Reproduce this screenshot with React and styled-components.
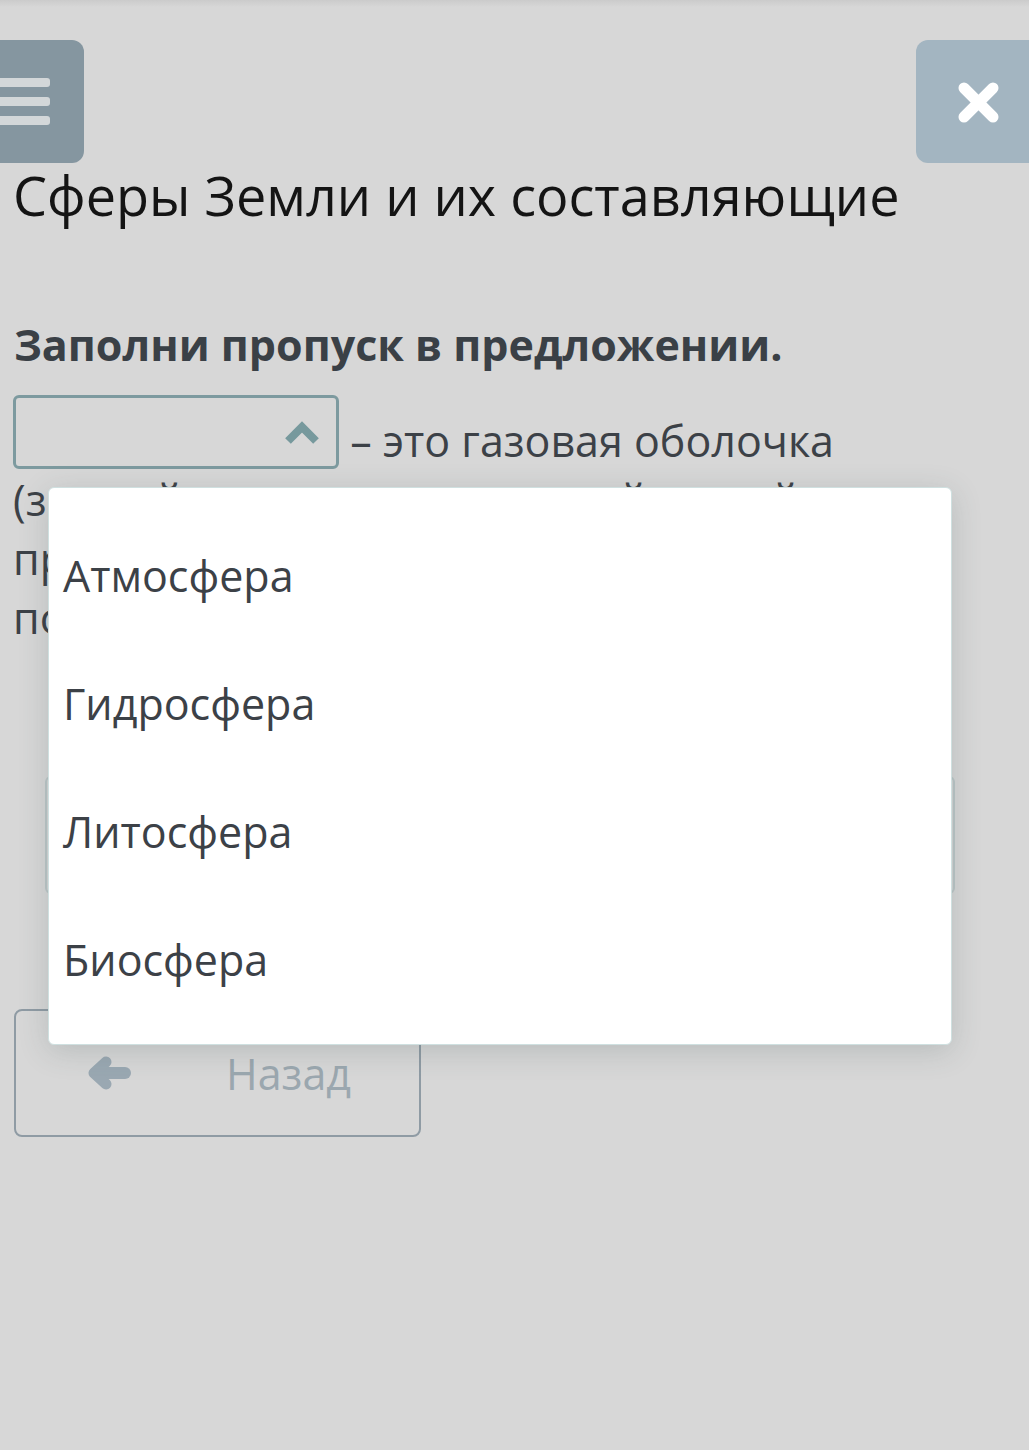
import React from "react";
import styled, { createGlobalStyle } from "styled-components";

const GlobalStyle = createGlobalStyle`
  html, body {
    margin: 0;
    padding: 0;
    background: #d7d7d7;
  }
  body {
    font-family: "Open Sans", "Noto Sans", sans-serif;
  }
`;

const Page = styled.div`
  position: relative;
  box-sizing: border-box;
  width: 1029px;
  min-height: 1450px;
  overflow: hidden;
  padding: 40px 13px 0 14px;
  background: linear-gradient(#cbcbcb, #d7d7d7 7px, #d7d7d7);
`;

const Header = styled.header`
  display: flex;
  justify-content: space-between;
  align-items: stretch;
  height: 123px;
  margin: 0 -13px 0 -14px;
`;

const MenuButton = styled.div`
  box-sizing: border-box;
  width: 124px;
  margin-left: -40px;
  padding-top: 38px;
  background: #8596a0;
  border-radius: 12px;
  display: flex;
  flex-direction: column;
  gap: 10px;
`;

const MenuLine = styled.span`
  display: block;
  width: 90px;
  height: 9px;
  background: #d3d7d9;
  border-radius: 0 3px 3px 0;
`;

const CloseButton = styled.div`
  box-sizing: border-box;
  width: 150px;
  margin-right: -37px;
  padding-left: 41px;
  padding-top: 2px;
  background: #a3b5c1;
  border-radius: 12px;
  display: flex;
  align-items: center;
`;

const Title = styled.h1`
  margin: 0 0 0 -1px;
  font-size: 54px;
  line-height: 64px;
  font-weight: 400;
  color: #141414;
`;

const Heading = styled.h2`
  margin: 90px 0 0 0;
  font-size: 43px;
  line-height: 56px;
  font-weight: 700;
  color: #3a4046;
`;

const Sentence = styled.p`
  margin: 22px 0 0 -1px;
  font-size: 43px;
  line-height: 59px;
  color: #3c4147;
  white-space: nowrap;
`;

const Select = styled.span`
  display: inline-block;
  box-sizing: border-box;
  width: 326px;
  height: 74px;
  overflow: hidden;
  vertical-align: -12px;
  border: 3px solid #7d9a9f;
  border-radius: 6px;

  svg {
    display: block;
    margin: 21px 15px 0 auto;
  }
`;

const HiddenBox = styled.div`
  box-sizing: border-box;
  margin: 129px 0 0 31px;
  width: 910px;
  height: 118px;
  border: 2px solid #bcc6c7;
  border-radius: 6px;
`;

const BackButton = styled.button`
  box-sizing: border-box;
  display: flex;
  align-items: center;
  gap: 95px;
  margin-top: 115px;
  width: 407px;
  height: 128px;
  padding: 0 0 0 72px;
  background: transparent;
  border: 2px solid #8f9ba4;
  border-radius: 8px;
  font-family: "Open Sans", "Noto Sans", sans-serif;
  font-size: 43px;
  color: #9ba7af;
`;

const Dropdown = styled.ul`
  position: absolute;
  left: 48px;
  top: 487px;
  box-sizing: border-box;
  width: 904px;
  height: 558px;
  margin: 0;
  padding: 24px 0 22px;
  list-style: none;
  background: #ffffff;
  border: 1px solid #cfe0e0;
  border-radius: 6px;
  box-shadow: 0 6px 30px rgba(60, 80, 80, 0.2);
`;

const Option = styled.li`
  height: 128px;
  line-height: 128px;
  padding-left: 14px;
  font-size: 43px;
  color: #3c4147;
`;

const ChevronUp = () => (
  <svg width="38" height="27" viewBox="0 0 38 27">
    <polyline
      points="5,22 19,8 33,22"
      fill="none"
      stroke="#77999d"
      strokeWidth="8"
      strokeLinejoin="miter"
    />
  </svg>
);

const CloseIcon = () => (
  <svg width="43" height="43" viewBox="0 0 43 43">
    <g stroke="#ffffff" strokeWidth="11" strokeLinecap="round">
      <line x1="7" y1="7" x2="36" y2="36" />
      <line x1="36" y1="7" x2="7" y2="36" />
    </g>
  </svg>
);

const ArrowLeft = () => (
  <svg width="43" height="34" viewBox="0 0 43 34">
    <g stroke="#9aa8b2" fill="none" strokeLinecap="round" strokeLinejoin="round">
      <line x1="8" y1="17" x2="37" y2="17" strokeWidth="12" />
      <polyline points="18,6 6,17 18,28" strokeWidth="11" />
    </g>
  </svg>
);

const options = ["Атмосфера", "Гидросфера", "Литосфера", "Биосфера"];

export default function App() {
  return (
    <>
      <GlobalStyle />
      <Page>
        <Header>
          <MenuButton>
            <MenuLine />
            <MenuLine />
            <MenuLine />
          </MenuButton>
          <CloseButton>
            <CloseIcon />
          </CloseButton>
        </Header>
        <Title>Сферы Земли и их составляющие</Title>
        <Heading>Заполни пропуск в предложении.</Heading>
        <Sentence>
          <Select>
            <ChevronUp />
          </Select>{" "}
          – это газовая оболочка
          <br />
          (земной покров газа, который нашей
          <br />
          просто необходим), пропускает лучи
          <br />
          полезные для жизни и защищает
        </Sentence>
        <HiddenBox />
        <BackButton>
          <ArrowLeft />
          <span>Назад</span>
        </BackButton>
        <Dropdown>
          {options.map((o) => (
            <Option key={o}>{o}</Option>
          ))}
        </Dropdown>
      </Page>
    </>
  );
}
